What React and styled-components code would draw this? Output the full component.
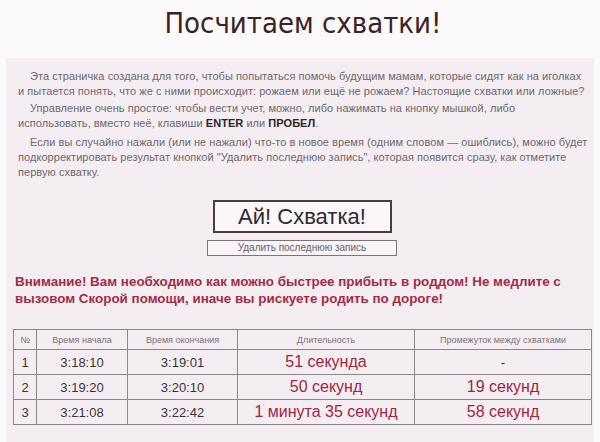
import React from "react";
import styled, { createGlobalStyle } from "styled-components";

const GlobalStyle = createGlobalStyle`
    html, body {
        margin: 0;
        padding: 0;
        background-color: #fbf9fa;
        font-family: "Liberation Sans", Arial, sans-serif;
    }
`
const Page = styled.div`
    width: 600px;
    height: 442px;
    overflow: hidden;
    display: flex;
    flex-direction: column;
`
const Header = styled.div`
    height: 58px;
    display: flex;
    justify-content: center;
    padding-top: 6px;
    box-sizing: border-box;
`
const Title = styled.h1`
    margin: 0 0 0 6px;
    font-family: "Liberation Sans Narrow", "DejaVu Sans Condensed", "Liberation Sans", sans-serif;
    font-weight: 400;
    font-size: 29px;
    color: #3b2227;
`
const Panel = styled.div`
    flex: 1;
    margin: 0 6px;
    background-color: #f4eef3;
    padding: 11px 8px 0 8px;
`
const Text = styled.p`
    margin: 0 0 ${props => props.gap || 2}px 0;
    padding-left: 4px;
    text-indent: 12px;
    font-size: 11px;
    letter-spacing: 0.05px;
    line-height: 15px;
    color: #6e686c;
    white-space: nowrap;
`
const Bold = styled.b`
    color: #2c2528;
`
const Actions = styled.div`
    display: flex;
    flex-direction: column;
    align-items: center;
    margin-top: 20px;
    gap: 7px;
    padding-left: 4px;
`
const MainButton = styled.button`
    width: 179px;
    height: 33px;
    border: 2px solid #4a3d42;
    background-color: #faf6f9;
    color: #2f2a2c;
    font-family: "Liberation Sans", sans-serif;
    font-size: 22px;
    padding: 0;
    cursor: pointer;
`
const DeleteButton = styled.button`
    width: 190px;
    height: 16px;
    border: 1px solid #7b7579;
    background-color: #f8f4f7;
    color: #676165;
    font-family: "Liberation Sans", sans-serif;
    font-size: 10px;
    line-height: 14px;
    padding: 0;
    cursor: pointer;
`
const Warning = styled.p`
    margin: 17px 0 0 1px;
    font-size: 13.4px;
    font-weight: 700;
    line-height: 17px;
    color: #a32c44;
    white-space: nowrap;
`
const Table = styled.table`
    margin-top: 22px;
    border-collapse: collapse;
    width: 579px;
    margin-left: -1px;
`
const Th = styled.th`
    height: 19px;
    border: 1px solid #8c8689;
    font-weight: 400;
    font-size: 9px;
    color: #7a7479;
    padding: 0;
    width: ${props => props.w}px;
`
const Td = styled.td`
    height: 24px;
    border: 1px solid #8c8689;
    text-align: center;
    padding: 0;
    font-size: ${props => props.big ? "16px" : "13px"};
    color: ${props => props.big ? "#a1253f" : "#3a3437"};
`

const rows = [
    ["1", "3:18:10", "3:19:01", "51 секунда", "-"],
    ["2", "3:19:20", "3:20:10", "50 секунд", "19 секунд"],
    ["3", "3:21:08", "3:22:42", "1 минута 35 секунд", "58 секунд"],
]

const App = () => {
    return (
        <Page>
            <GlobalStyle />
            <Header>
                <Title>Посчитаем схватки!</Title>
            </Header>
            <Panel>
                <Text>
                    Эта страничка создана для того, чтобы попытаться помочь будущим мамам, которые сидят как на иголках<br />
                    и пытается понять, что же с ними происходит: рожаем или ещё не рожаем? Настоящие схватки или ложные?
                </Text>
                <Text gap={4}>
                    Управление очень простое: чтобы вести учет, можно, либо нажимать на кнопку мышкой, либо<br />
                    использовать, вместо неё, клавиши <Bold>ENTER</Bold> или <Bold>ПРОБЕЛ</Bold>.
                </Text>
                <Text>
                    Если вы случайно нажали (или не нажали) что-то в новое время (одним словом — ошиблись), можно будет<br />
                    подкорректировать результат кнопкой "Удалить последнюю запись", которая появится сразу, как отметите<br />
                    первую схватку.
                </Text>
                <Actions>
                    <MainButton>Ай! Схватка!</MainButton>
                    <DeleteButton>Удалить последнюю запись</DeleteButton>
                </Actions>
                <Warning>
                    Внимание! Вам необходимо как можно быстрее прибыть в роддом! Не медлите с<br />
                    вызовом Скорой помощи, иначе вы рискуете родить по дороге!
                </Warning>
                <Table>
                    <thead>
                        <tr>
                            <Th w={22}>№</Th>
                            <Th w={90}>Время начала</Th>
                            <Th w={109}>Время окончания</Th>
                            <Th w={176}>Длительность</Th>
                            <Th>Промежуток между схватками</Th>
                        </tr>
                    </thead>
                    <tbody>
                        {rows.map(r => (
                            <tr key={r[0]}>
                                <Td>{r[0]}</Td>
                                <Td>{r[1]}</Td>
                                <Td>{r[2]}</Td>
                                <Td big>{r[3]}</Td>
                                <Td big={r[4] !== "-"}>{r[4]}</Td>
                            </tr>
                        ))}
                    </tbody>
                </Table>
            </Panel>
        </Page>
    )
}

export default App
